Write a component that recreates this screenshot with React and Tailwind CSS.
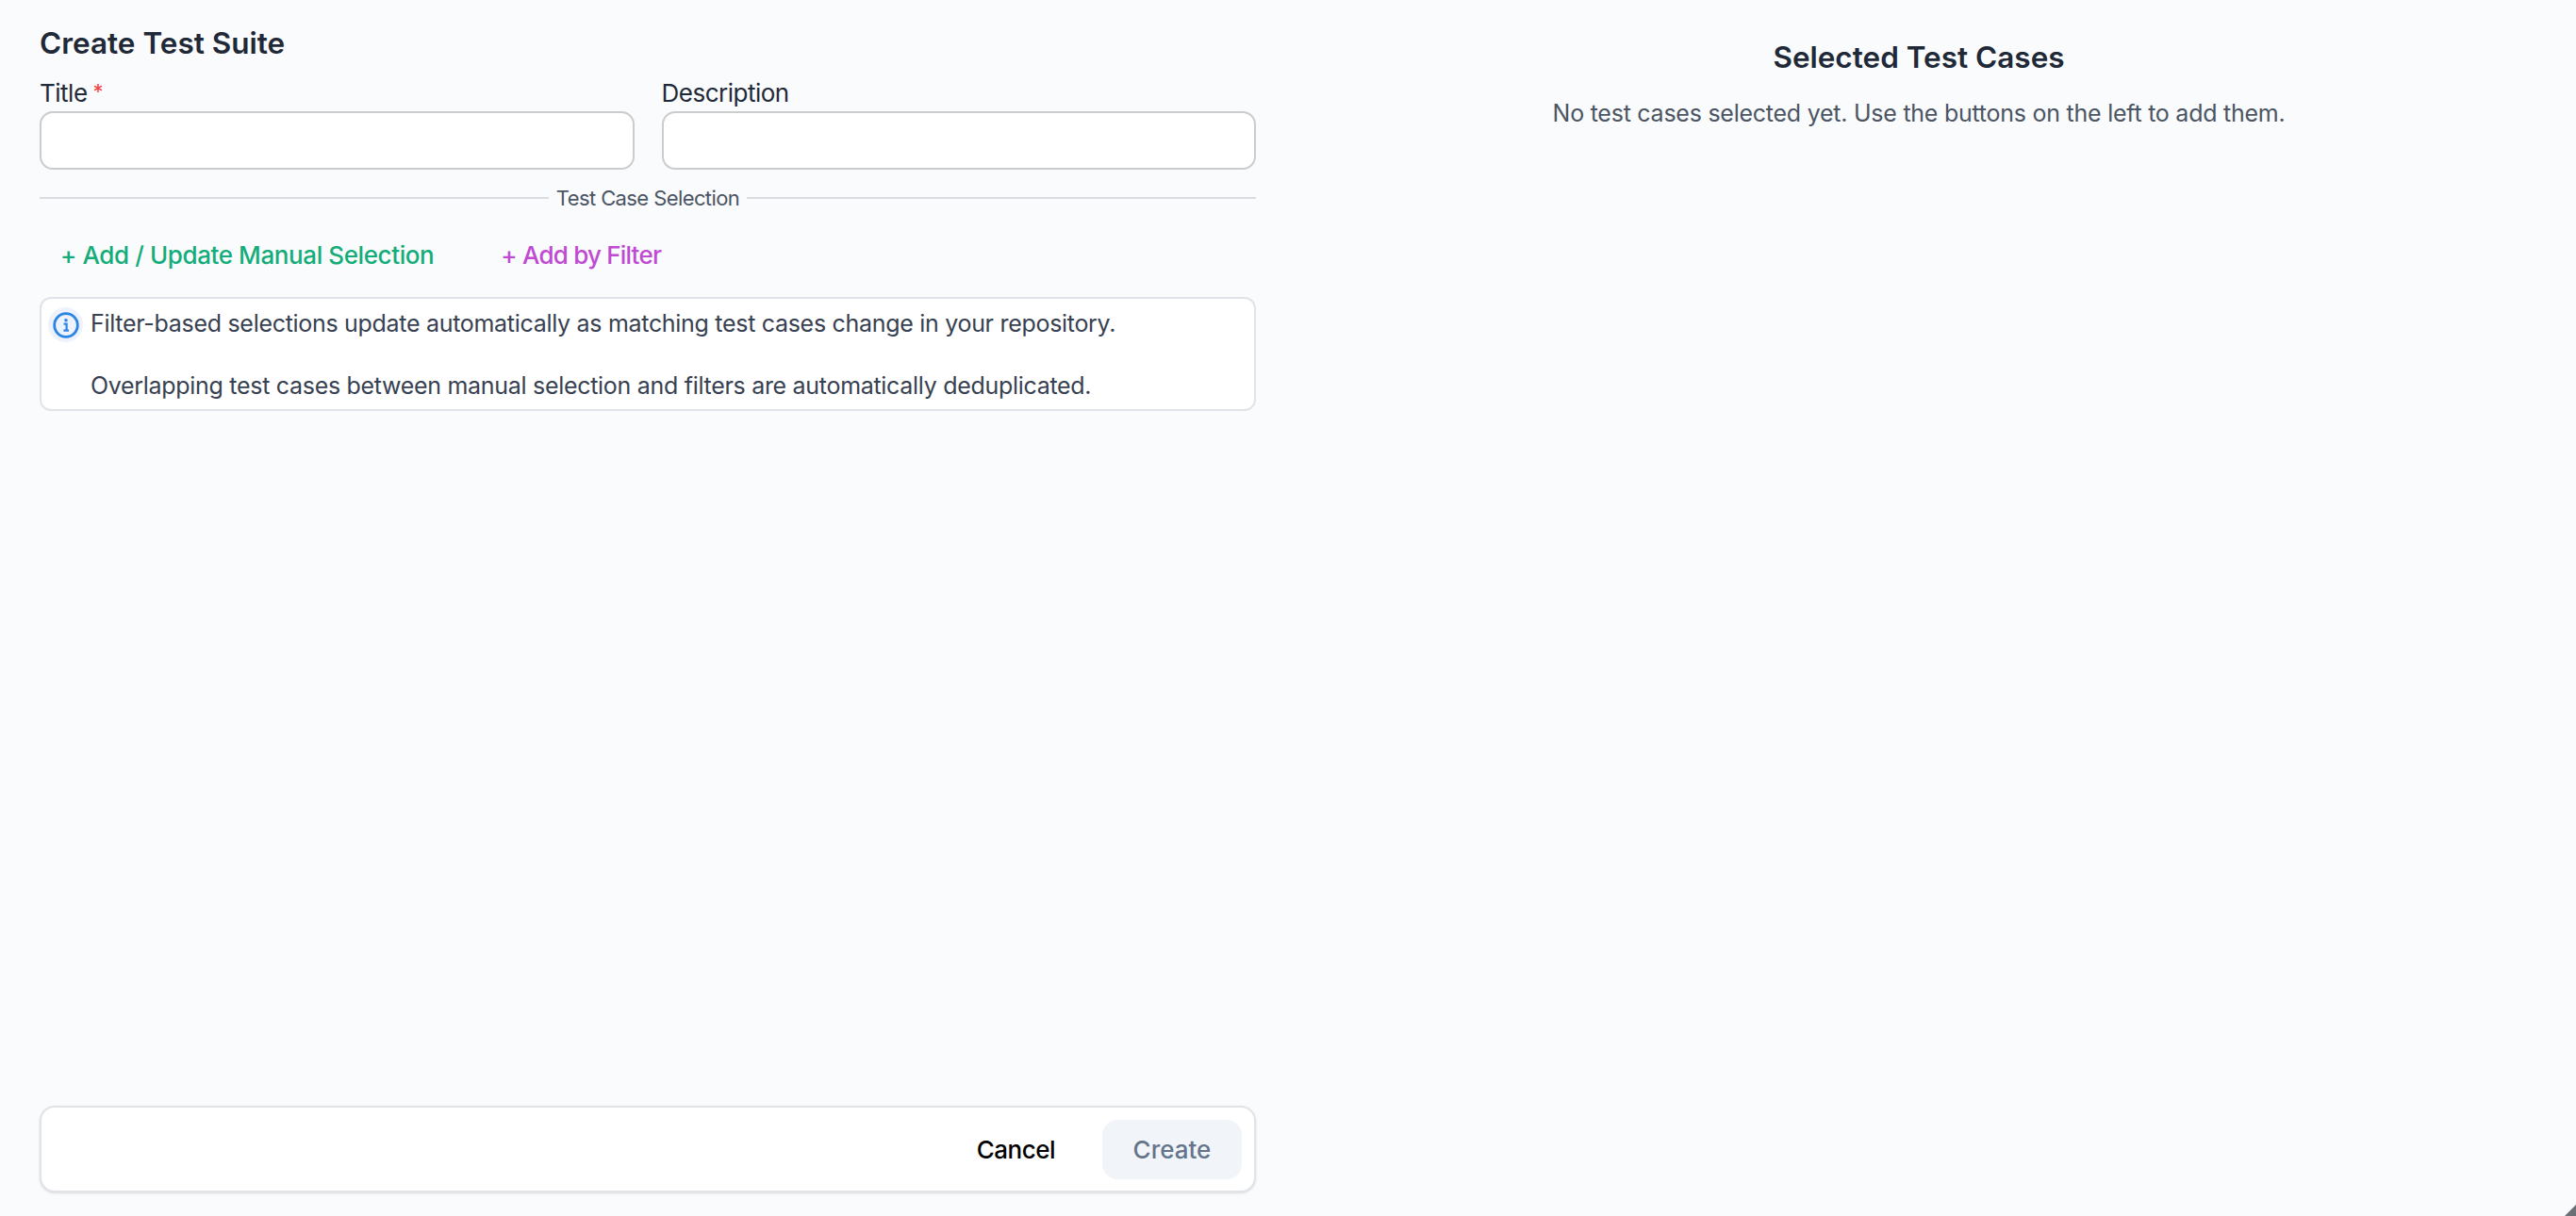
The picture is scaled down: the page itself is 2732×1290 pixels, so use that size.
function InfoIcon() {
  return (
    <span className="-mt-[1px] flex h-[37px] w-[37px] shrink-0 items-center justify-center rounded-full bg-[#edf2fc]">
      <svg width="28" height="28" viewBox="0 0 28 28" fill="none">
        <circle cx="14" cy="14" r="12.3" stroke="#2b85e4" strokeWidth="2.8" />
        <circle cx="14" cy="8.8" r="1.8" fill="#2b85e4" />
        <path d="M11.6 12.6h3v6.6M11.4 19.6h5.6" stroke="#2b85e4" strokeWidth="2.2" />
      </svg>
    </span>
  );
}

function Field({ label, required }) {
  return (
    <div className="flex-1">
      <div className="flex h-[36px] items-center text-[26px] leading-none tracking-[-0.5px] text-[#1f2937]">
        {label}
        {required && <span className="ml-[6px] -mt-[4px] text-[22px] text-[#ef4444]">*</span>}
      </div>
      <div className="mt-[1px] h-[62px] rounded-[14px] border-2 border-[#cccccc] bg-white"></div>
    </div>
  );
}

export default function App() {
  return (
    <div className="relative flex h-screen bg-[#fafbfd] font-['Inter',sans-serif] antialiased">
      {/* Left form */}
      <div className="flex w-[1375px] shrink-0 flex-col pb-[25px] pl-[42px] pr-[43px] pt-[24px]">
        <h1 className="text-[31.5px] font-semibold leading-[44px] text-[#1f2937]">Create Test Suite</h1>

        <div className="mt-[13px] flex gap-[29px]">
          <Field label="Title" required />
          <Field label="Description" />
        </div>

        <div className="mt-[6px] flex h-[48px] items-center gap-[8px] text-[22px] tracking-[-0.6px] text-[#4b5563]">
          <div className="h-[2px] flex-1 bg-[#d9dce1]"></div>
          <span>Test Case Selection</span>
          <div className="h-[2px] flex-1 bg-[#d9dce1]"></div>
        </div>

        <div className="mt-[8px] flex h-[56px] items-center gap-[71px] pl-[22px] text-[26px] font-medium">
          <button className="tracking-[-0.4px] text-[#14ad7a]">+ Add / Update Manual Selection</button>
          <button className="tracking-[-0.8px] text-[#c04ad2]">+ Add by Filter</button>
        </div>

        <div className="mt-[17px] flex gap-[8px] rounded-[12px] border-2 border-[#e0e3e8] bg-white pl-[7px] pr-[12px] pt-[10px] pb-[8px]">
          <InfoIcon />
          <div className="text-[25px] leading-[33px] tracking-[-0.3px] text-[#374151]">
            <p>Filter-based selections update automatically as matching test cases change in your repository.</p>
            <p className="mt-[33px]">Overlapping test cases between manual selection and filters are automatically deduplicated.</p>
          </div>
        </div>

        {/* Footer */}
        <div className="mt-auto flex h-[92px] items-center justify-end gap-[50px] rounded-[16px] border-2 border-[#e0e3e8] bg-white pr-[13px] shadow-sm">
          <button className="text-[26px] font-medium tracking-[-0.5px] text-black">Cancel</button>
          <button className="h-[63px] w-[148px] rounded-[16px] bg-[#f1f5f9] text-[26px] font-medium text-[#64748b]">Create</button>
        </div>
      </div>

      {/* Right panel */}
      <div className="flex flex-1 flex-col items-center pt-[37px] pr-[37px]">
        <h2 className="text-[31.5px] font-semibold leading-[48px] text-[#1f2937]">Selected Test Cases</h2>
        <p className="mt-[17px] text-[25px] leading-[36px] tracking-[-0.25px] text-[#4b5563]">No test cases selected yet. Use the buttons on the left to add them.</p>
      </div>

      <svg className="absolute bottom-0 right-0" width="12" height="12" viewBox="0 0 12 12">
        <path d="M12 0V12H0Z" fill="#6b6f76" />
      </svg>
    </div>
  );
}
